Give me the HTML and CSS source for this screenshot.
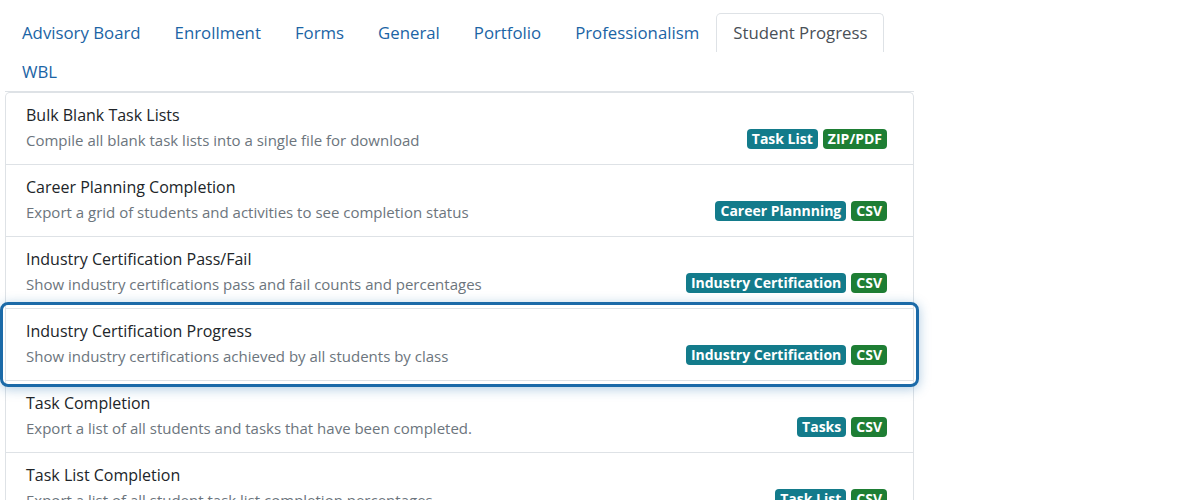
FILE: index.html
```html
<!DOCTYPE html>
<html lang="en">
<head>
  <meta charset="UTF-8">
  <meta name="viewport" content="width=device-width, initial-scale=1.0">
  <title>Reports</title>
  <link rel="stylesheet" href="styles.css">
</head>
<body>
  <div class="reports">
    <ul class="tabs">
      <li><a class="tab">Advisory Board</a></li>
      <li><a class="tab">Enrollment</a></li>
      <li><a class="tab">Forms</a></li>
      <li><a class="tab">General</a></li>
      <li><a class="tab">Portfolio</a></li>
      <li><a class="tab">Professionalism</a></li>
      <li><a class="tab active">Student Progress</a></li>
      <li><a class="tab">WBL</a></li>
    </ul>

    <div class="report-list">
      <a class="report">
        <div class="report-text">
          <div class="report-title">Bulk Blank Task Lists</div>
          <div class="report-desc">Compile all blank task lists into a single file for download</div>
        </div>
        <div class="badges">
          <span class="badge badge-type">Task List</span>
          <span class="badge badge-format">ZIP/PDF</span>
        </div>
      </a>
      <a class="report">
        <div class="report-text">
          <div class="report-title">Career Planning Completion</div>
          <div class="report-desc">Export a grid of students and activities to see completion status</div>
        </div>
        <div class="badges">
          <span class="badge badge-type">Career Plannning</span>
          <span class="badge badge-format">CSV</span>
        </div>
      </a>
      <a class="report">
        <div class="report-text">
          <div class="report-title">Industry Certification Pass/Fail</div>
          <div class="report-desc">Show industry certifications pass and fail counts and percentages</div>
        </div>
        <div class="badges">
          <span class="badge badge-type">Industry Certification</span>
          <span class="badge badge-format">CSV</span>
        </div>
      </a>
      <a class="report focused">
        <div class="report-text">
          <div class="report-title">Industry Certification Progress</div>
          <div class="report-desc">Show industry certifications achieved by all students by class</div>
        </div>
        <div class="badges">
          <span class="badge badge-type">Industry Certification</span>
          <span class="badge badge-format">CSV</span>
        </div>
      </a>
      <a class="report">
        <div class="report-text">
          <div class="report-title">Task Completion</div>
          <div class="report-desc">Export a list of all students and tasks that have been completed.</div>
        </div>
        <div class="badges">
          <span class="badge badge-type">Tasks</span>
          <span class="badge badge-format">CSV</span>
        </div>
      </a>
      <a class="report">
        <div class="report-text">
          <div class="report-title">Task List Completion</div>
          <div class="report-desc">Export a list of all student task list completion percentages</div>
        </div>
        <div class="badges">
          <span class="badge badge-type">Task List</span>
          <span class="badge badge-format">CSV</span>
        </div>
      </a>
    </div>
  </div>
</body>
</html>
```

FILE: styles.css
```css
body {
  font-family: "Open Sans", Arial, sans-serif;
  background-color: #fff;
  color: #212529;
  margin: 0;
}

.reports {
  width: 909px;
  padding: 13px 0 0 5px;
}

/* tab strip */
.tabs {
  display: flex;
  flex-wrap: wrap;
  list-style: none;
  margin: 0;
  padding: 0;
  border-bottom: 1px solid #dee2e6;
}

.tab {
  display: block;
  padding: 8px 16px;
  font-size: 16.8px;
  line-height: 22px;
  color: #1b64a5;
  border: 1px solid transparent;
  border-bottom: none;
  border-radius: 5px 5px 0 0;
  cursor: pointer;
}

.tab.active {
  color: #495057;
  border-color: #dee2e6;
  background-color: #fff;
}

/* report rows */
.report-list {
  border: 1px solid #dee2e6;
  border-bottom: none;
  border-radius: 5px 5px 0 0;
}

.report {
  position: relative;
  display: flex;
  justify-content: space-between;
  align-items: flex-end;
  padding: 10px 26px 13px 20px;
  border-bottom: 1px solid #dee2e6;
  cursor: pointer;
}

.report-title {
  font-size: 16px;
  line-height: 24px;
  color: #212529;
}

.report-desc {
  font-size: 15px;
  line-height: 21px;
  color: #6c757d;
  margin-top: 3px;
}

.badges {
  display: flex;
  gap: 5px;
  margin-bottom: 2px;
}

.badge {
  display: inline-block;
  padding: 0 5px;
  font-size: 14px;
  line-height: 20px;
  font-weight: 700;
  color: #fff;
  border-radius: 4px;
}

.badge-type {
  background-color: #137b8b;
}

.badge-format {
  background-color: #1e7e34;
}

/* keyboard focus ring on the selected row */
.report.focused::after {
  content: "";
  position: absolute;
  top: -7px;
  left: -6px;
  right: -6px;
  bottom: -7px;
  border: 3px solid #1b6aa8;
  border-radius: 8px;
  box-shadow: 0 2px 12px rgba(27, 106, 168, 0.35);
  pointer-events: none;
}
```
